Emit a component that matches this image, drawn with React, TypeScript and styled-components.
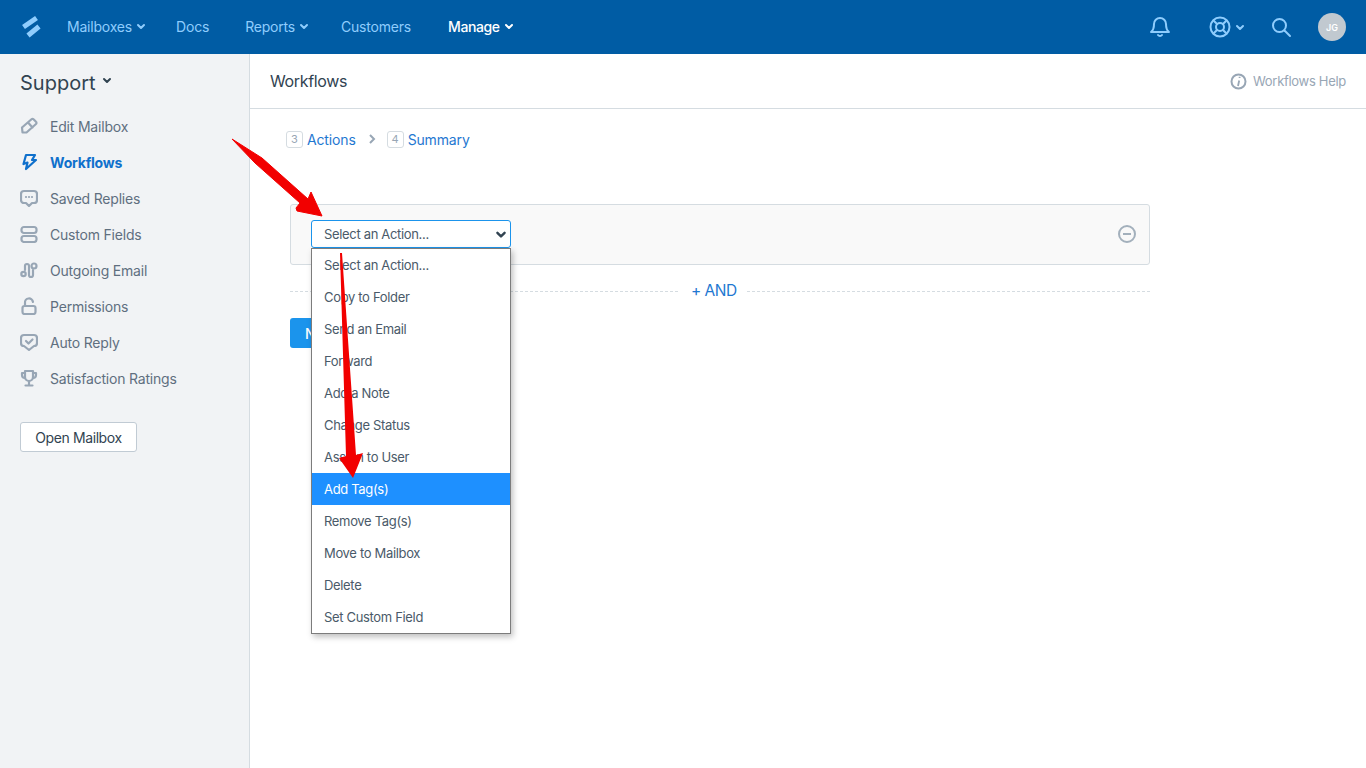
import styled, { createGlobalStyle } from 'styled-components';

const GlobalStyle = createGlobalStyle`
  html, body { margin: 0; padding: 0; height: 100%; overflow: hidden; }
  body { font-family: Inter, "Liberation Sans", sans-serif; font-size: 14px; color: #556575; background: #fff; }
  #root { height: 100%; }
  * { box-sizing: border-box; }
`;

const Page = styled.div`
  position: relative;
  display: flex;
  flex-direction: column;
  height: 768px;
`;

const TopBar = styled.header`
  display: flex;
  align-items: center;
  flex: 0 0 54px;
  padding: 0 20px;
  background: #005ca4;
`;

const Logo = styled.svg`
  width: 22px;
  height: 24px;
  margin-right: 25px;
  fill: none;
  stroke: #8fcdfd;
  stroke-width: 5;
`;

const NavList = styled.nav`
  display: flex;
  align-items: center;
  padding-bottom: 2px;
`;

const NavItem = styled.a<{ $active?: boolean; $after?: number }>`
  display: flex;
  align-items: center;
  gap: 4px;
  margin-right: ${({ $after }) => $after ?? 0}px;
  font-size: 14px;
  letter-spacing: ${({ $active }) => ($active ? '-0.4px' : '-0.2px')};
  color: ${({ $active }) => ($active ? '#ffffff' : '#8fcdfd')};
  font-weight: ${({ $active }) => ($active ? 500 : 400)};
`;

const TopActions = styled.div`
  display: flex;
  align-items: center;
  margin-left: auto;
`;

const TopIcon = styled.svg<{ $gap: number }>`
  width: 22px;
  height: 22px;
  margin-right: ${({ $gap }) => $gap}px;
  fill: none;
  stroke: #8fcdfd;
  stroke-width: 2;
  stroke-linecap: round;
  stroke-linejoin: round;
`;

const HelpGroup = styled.div`
  display: flex;
  align-items: center;
  gap: 4px;
  margin-right: 25px;
`;

const Avatar = styled.div`
  display: flex;
  align-items: center;
  justify-content: center;
  width: 28px;
  height: 28px;
  border-radius: 50%;
  background: #c1c9d0;
  color: #fff;
  font-size: 9px;
  font-weight: 600;
`;

const Body = styled.div`
  display: flex;
  flex: 1;
  min-height: 0;
`;

const Sidebar = styled.aside`
  flex: 0 0 250px;
  padding: 16px 20px 0;
  background: #f1f3f5;
  border-right: 1px solid #d5dce1;
`;

const MailboxTitle = styled.div`
  display: flex;
  align-items: center;
  gap: 6px;
  height: 26px;
  margin-bottom: 12px;
  font-size: 20px;
  color: #314351;

  svg {
    margin-top: -6px;
  }
`;

const SideList = styled.ul`
  display: flex;
  flex-direction: column;
  margin: 0 0 26px;
  padding: 0;
  list-style: none;
`;

const SideItem = styled.li<{ $active?: boolean }>`
  display: flex;
  align-items: center;
  gap: 12px;
  height: 36px;
  font-size: 14px;
  letter-spacing: -0.2px;
  color: ${({ $active }) => ($active ? '#0f70cc' : '#5f6f7f')};
  font-weight: ${({ $active }) => ($active ? 700 : 400)};
`;

const SideIcon = styled.svg<{ $active?: boolean }>`
  flex: 0 0 18px;
  width: 18px;
  height: 18px;
  margin-top: -1px;
  fill: none;
  stroke: ${({ $active }) => ($active ? '#0f70cc' : '#98a6b5')};
  stroke-width: 2.2;
  stroke-linecap: round;
  stroke-linejoin: round;
`;

const OpenButton = styled.button`
  display: block;
  width: 117px;
  height: 30px;
  padding: 0;
  background: #fff;
  border: 1px solid #c1cbd4;
  border-radius: 3px;
  font: 400 14px Inter, "Liberation Sans", sans-serif;
  letter-spacing: -0.4px;
  color: #314351;
`;

const Main = styled.main`
  flex: 1;
  min-width: 0;
`;

const MainHeader = styled.div`
  display: flex;
  align-items: center;
  justify-content: space-between;
  height: 55px;
  padding: 0 20px;
  border-bottom: 1px solid #d5dce1;
`;

const PageTitle = styled.h1`
  margin: 0;
  font-size: 16px;
  font-weight: 400;
  letter-spacing: -0.36px;
  color: #314351;
`;

const HelpLink = styled.a`
  display: flex;
  align-items: center;
  gap: 6px;
  font-size: 13px;
  letter-spacing: -0.3px;
  color: #98a6b5;
`;

const Content = styled.div`
  padding: 21px 0 0 40px;
`;

const Steps = styled.div`
  display: flex;
  align-items: center;
  height: 18px;
  margin: 0 0 56px -4px;
`;

const StepBadge = styled.span`
  display: flex;
  align-items: center;
  justify-content: center;
  width: 17px;
  height: 17px;
  margin-right: 4px;
  border: 1px solid #d5dce1;
  border-radius: 3px;
  font-size: 11px;
  color: #98a6b5;
`;

const StepLabel = styled.a`
  font-size: 14px;
  letter-spacing: -0.15px;
  color: #1f78d1;
`;

const StepArrow = styled.svg`
  width: 8px;
  height: 10px;
  margin: 0 11px 0 12px;
  fill: none;
  stroke: #98a6b5;
  stroke-width: 2;
`;

const ActionPanel = styled.div`
  display: flex;
  align-items: center;
  justify-content: space-between;
  width: 860px;
  height: 61px;
  padding: 0 12px 0 20px;
  background: #f9f9f9;
  border: 1px solid #d5dce1;
  border-radius: 3px;
`;

const SelectWrap = styled.div`
  position: relative;
  width: 200px;
  margin-bottom: 2px;
`;

const SelectBox = styled.div`
  display: flex;
  align-items: center;
  justify-content: space-between;
  height: 28px;
  padding: 0 3px 0 12px;
  background: #fff;
  border: 1px solid #1b94ec;
  border-radius: 3px;
  font-size: 13px;
  letter-spacing: -0.33px;
  color: #4a5a69;
`;

const Dropdown = styled.ul`
  position: absolute;
  top: 28px;
  left: 0;
  z-index: 5;
  width: 200px;
  margin: 0;
  padding: 0;
  list-style: none;
  background: #fff;
  border: 1px solid #7c7c7c;
  box-shadow: 2px 3px 6px rgba(0, 0, 0, 0.25);
`;

const Option = styled.li<{ $selected?: boolean }>`
  display: flex;
  align-items: center;
  height: 32px;
  padding: 0 12px;
  font-size: 13px;
  letter-spacing: -0.33px;
  color: ${({ $selected }) => ($selected ? '#fff' : '#4a5a69')};
  background: ${({ $selected }) => ($selected ? '#1e90ff' : 'transparent')};
`;

const RemoveIcon = styled.svg`
  width: 20px;
  height: 20px;
  margin-bottom: 2px;
  fill: none;
  stroke: #a3b0bc;
  stroke-width: 2;
`;

const AndRow = styled.div`
  display: flex;
  align-items: center;
  width: 860px;
  height: 20px;
  margin: 16px 0 17px;
`;

const DashLine = styled.div<{ $fixed?: number }>`
  flex: ${({ $fixed }) => ($fixed ? `0 0 ${$fixed}px` : '1')};
  border-top: 1px dashed #d5dce1;
`;

const AndLabel = styled.a`
  margin: -2px 10px 0 13px;
  font-size: 15.5px;
  letter-spacing: -0.5px;
  color: #1f78d1;
`;

const NextButton = styled.button`
  display: block;
  width: 70px;
  height: 30px;
  padding: 0 15px;
  background: #1b94ec;
  border: 0;
  border-radius: 3px;
  font: 500 14px Inter, "Liberation Sans", sans-serif;
  color: #fff;
  text-align: left;
`;

const ArrowLayer = styled.svg`
  position: absolute;
  top: 0;
  left: 0;
  z-index: 10;
  width: 1366px;
  height: 768px;
  pointer-events: none;
`;

const Caret = ({ color, size = 10 }: { color: string; size?: number }) => (
  <svg width={size} height={size} viewBox="0 0 10 10" fill="none" stroke={color} strokeWidth="2" strokeLinecap="round" strokeLinejoin="round">
    <path d="M2 4l3 3 3-3" />
  </svg>
);

const sideItems = [
  { label: 'Edit Mailbox', icon: <path d="M2.500 15.500H6.500L16 7a1.500 1.500 0 0 0 0-2.200L13.500 2.300a1.500 1.500 0 0 0-2 0L2 10.500zM8 5.500l4.500 5" /> },
  { label: 'Workflows', active: true, icon: <path d="M6 2h9l-3 5h4L6 16l1.500-6.500L3.500 11z" /> },
  { label: 'Saved Replies', icon: <><path d="M4 2h10a3 3 0 0 1 3 3v6a3 3 0 0 1-3 3h-2l-3 3-3-3H4a3 3 0 0 1-3-3V5a3 3 0 0 1 3-3z" /><path d="M6 8h.01M9 8h.01M12 8h.01" /></> },
  { label: 'Custom Fields', icon: <><rect x="1.500" y="2" width="15" height="6" rx="2.500" /><rect x="1.500" y="11" width="15" height="6" rx="2.500" /></> },
  { label: 'Outgoing Email', icon: <><path d="M5 9V5a2 2 0 0 1 4 0v9a2 2 0 0 0 4 0V9" /><circle cx="14" cy="5" r="2.500" /><circle cx="3.500" cy="13" r="2.200" /></> },
  { label: 'Permissions', icon: <><rect x="2.500" y="9" width="13" height="8" rx="2" /><path d="M5 9V6a4 4 0 0 1 8-1" /></> },
  { label: 'Auto Reply', icon: <><path d="M4 2h10a3 3 0 0 1 3 3v5a3 3 0 0 1-3 3l-5 4-5-4a3 3 0 0 1-3-3V5a3 3 0 0 1 3-3z" /><path d="M6 8l2.500 2.500L12.500 6.500" /></> },
  { label: 'Satisfaction Ratings', icon: <><path d="M5 2h8v6a4 4 0 0 1-8 0z" /><path d="M5 4H2v2a3 3 0 0 0 3 3M13 4h3v2a3 3 0 0 1-3 3M9 12v4M5.500 16.500h7" /></> },
];

const actions = ['Select an Action...', 'Copy to Folder', 'Send an Email', 'Forward', 'Add a Note', 'Change Status', 'Assign to User', 'Add Tag(s)', 'Remove Tag(s)', 'Move to Mailbox', 'Delete', 'Set Custom Field'];

export default function App() {
  return (
    <Page>
      <GlobalStyle />
      <TopBar>
        <Logo viewBox="0 0 22 24">
          <path d="M3.500 12L16.500 3M8 20.500L19 11.500" />
        </Logo>
        <NavList>
          <NavItem $after={30}>Mailboxes <Caret color="#8fcdfd" /></NavItem>
          <NavItem $after={36}>Docs</NavItem>
          <NavItem $after={32}>Reports <Caret color="#8fcdfd" /></NavItem>
          <NavItem $after={37}>Customers</NavItem>
          <NavItem $active>Manage <Caret color="#fff" /></NavItem>
        </NavList>
        <TopActions>
          <TopIcon $gap={38} viewBox="0 0 22 22">
            <path d="M11 2a6 6 0 0 1 6 6c0 5 1.500 7 3 8H2c1.500-1 3-3 3-8a6 6 0 0 1 6-6zM9 19a2.500 2.500 0 0 0 4 0" />
          </TopIcon>
          <HelpGroup>
            <TopIcon $gap={0} viewBox="0 0 22 22">
              <circle cx="11" cy="11" r="9.500" />
              <circle cx="11" cy="11" r="4" />
              <path d="M5 5l3 3M17 5l-3 3M5 17l3-3M17 17l-3-3" />
            </TopIcon>
            <Caret color="#8fcdfd" />
          </HelpGroup>
          <TopIcon $gap={26} viewBox="0 0 22 22">
            <circle cx="9.500" cy="9.500" r="6.500" />
            <path d="M14.500 14.500L20 20" />
          </TopIcon>
          <Avatar>JG</Avatar>
        </TopActions>
      </TopBar>
      <Body>
        <Sidebar>
          <MailboxTitle>Support <Caret color="#314351" /></MailboxTitle>
          <SideList>
            {sideItems.map((item) => (
              <SideItem key={item.label} $active={item.active}>
                <SideIcon $active={item.active} viewBox="0 0 18 18">{item.icon}</SideIcon>
                {item.label}
              </SideItem>
            ))}
          </SideList>
          <OpenButton>Open Mailbox</OpenButton>
        </Sidebar>
        <Main>
          <MainHeader>
            <PageTitle>Workflows</PageTitle>
            <HelpLink>
              <svg width="17" height="17" viewBox="0 0 17 17" fill="none" stroke="#98a6b5" strokeWidth="2">
                <circle cx="8.500" cy="8.500" r="7" />
                <path d="M9.200 7.500L8 13M9.600 3.800v1.200" strokeWidth="1.800" />
              </svg>
              Workflows Help
            </HelpLink>
          </MainHeader>
          <Content>
            <Steps>
              <StepBadge>3</StepBadge>
              <StepLabel>Actions</StepLabel>
              <StepArrow viewBox="0 0 8 10"><path d="M2 1l4 4-4 4" /></StepArrow>
              <StepBadge>4</StepBadge>
              <StepLabel>Summary</StepLabel>
            </Steps>
            <ActionPanel>
              <SelectWrap>
                <SelectBox>
                  Select an Action...
                  <Caret color="#314351" size={12} />
                </SelectBox>
                <Dropdown>
                  {actions.map((a) => (
                    <Option key={a} $selected={a === 'Add Tag(s)'}>{a}</Option>
                  ))}
                </Dropdown>
              </SelectWrap>
              <RemoveIcon viewBox="0 0 20 20">
                <circle cx="10" cy="10" r="8" />
                <path d="M6 10h8" />
              </RemoveIcon>
            </ActionPanel>
            <AndRow>
              <DashLine $fixed={388} />
              <AndLabel>+ AND</AndLabel>
              <DashLine />
            </AndRow>
            <NextButton>Next</NextButton>
          </Content>
        </Main>
      </Body>
      <ArrowLayer viewBox="0 0 1366 768">
        <polygon fill="#f20000" stroke="#f20000" strokeLinejoin="round" strokeWidth="1" points="232,139 262,158 308,199 311,192 322,216 297,211 296,208 300,203 255,163" />
        <polygon fill="#f20000" points="340,253 342,253 356,455 363,453 353,478 339,458 346,456" />
      </ArrowLayer>
    </Page>
  );
}
